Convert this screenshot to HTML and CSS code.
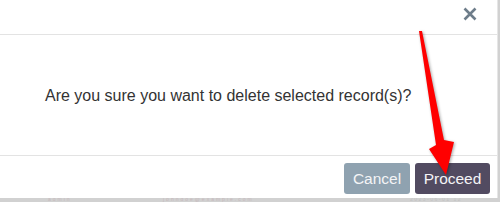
FILE: index.html
```html
<!DOCTYPE html>
<html>
<head>
<meta charset="utf-8">
<link rel="stylesheet" href="styles.css">
</head>
<body>
<div class="page">
  <div class="backdrop-row">
    <span class="bg-a">admin</span>
    <span class="bg-b">johndoe@example.com</span>
    <span class="bg-c">2023-06-01 12</span>
  </div>
  <div class="modal">
    <div class="modal-header">
      <button class="close" aria-label="Close">
        <svg width="14" height="14" viewBox="0 0 14 14"><path d="M1.5 1.5 L12.5 12.5 M12.5 1.5 L1.5 12.5" stroke="#6e7d8a" stroke-width="2.6" stroke-linecap="butt" fill="none"/></svg>
      </button>
    </div>
    <div class="modal-body">
      <p class="message">Are you sure you want to delete selected record(s)?</p>
    </div>
    <div class="modal-footer">
      <button class="btn btn-cancel">Cancel</button>
      <button class="btn btn-proceed">Proceed</button>
    </div>
  </div>
  <svg class="arrow" width="500" height="202" viewBox="0 0 500 202">
    <polygon points="419,31 422,31 444,140 454,142 446,175 429,149 436,145" fill="#ff0000"/>
  </svg>
</div>
</body>
</html>
```
FILE: styles.css
```css
html, body {
  margin: 0;
  padding: 0;
}
body {
  width: 500px;
  height: 202px;
  overflow: hidden;
  background: #d1d1d1;
  font-family: "Liberation Sans", Arial, sans-serif;
}
.page {
  position: relative;
  width: 500px;
  height: 202px;
  overflow: hidden;
}
.modal {
  width: 497px;
  height: 198px;
  background: #ffffff;
  display: flex;
  flex-direction: column;
  box-shadow: 1px 0 0 #e6e6e6;
  position: relative;
}
.modal-header {
  border-bottom: 1px solid #e3e3e3;
  display: flex;
  justify-content: flex-end;
  align-items: flex-start;
  box-sizing: border-box;
  height: 35px;
}
.close {
  border: 0;
  background: transparent;
  padding: 0;
  margin: 7px 20px 0 0;
  width: 14px;
  height: 14px;
  display: block;
}
.close svg { display: block; }
.modal-body {
  height: 121px;
  border-bottom: 1px solid #e3e3e3;
  display: flex;
  align-items: center;
  padding-left: 45px;
  box-sizing: border-box;
}
.message {
  margin: 0;
  font-size: 16px;
  color: #333333;
  padding-top: 1px;
}
.modal-footer {
  display: flex;
  justify-content: flex-end;
  gap: 5px;
  padding: 7px 7px 0 0;
}
.btn {
  font-family: "Liberation Sans", Arial, sans-serif;
  font-size: 15.5px;
  color: #f4f4f6;
  border: 0;
  border-radius: 3px;
  height: 31px;
  padding: 0;
}
.btn-cancel {
  width: 66px;
  background: #8fa2b0;
}
.btn-proceed {
  width: 75px;
  background: #524b61;
}
.backdrop-row {
  position: absolute;
  left: 0;
  top: 197px;
  width: 500px;
  height: 5px;
  font-size: 5px;
  line-height: 5px;
  color: #c7b9bc;
}
.bg-a { position: absolute; left: 48px; top: 0; letter-spacing: 2px; }
.bg-b { position: absolute; left: 163px; top: 0; letter-spacing: 2px; }
.bg-c { position: absolute; left: 410px; top: 0; color: #c2c2c2; letter-spacing: 1.5px; }
.arrow {
  position: absolute;
  left: 0;
  top: 0;
  filter: drop-shadow(1px 1px 1.5px rgba(0,0,0,0.35));
  pointer-events: none;
}
```
